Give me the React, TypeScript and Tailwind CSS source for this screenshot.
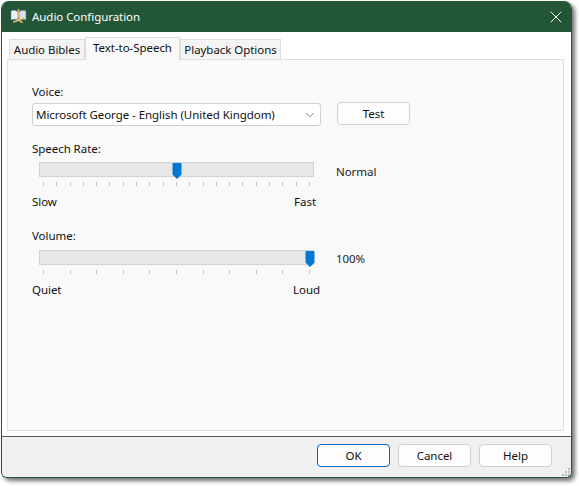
import { ChevronDown, X } from 'lucide-react';

const font = 'font-["Noto_Sans",sans-serif]';

function DialogButton({ label, primary, className }: { label: string; primary?: boolean; className?: string }) {
  return (
    <button
      className={`w-[73px] h-[23px] rounded-[4px] bg-[#fdfdfd] text-[11.5px] tracking-[-0.05px] text-[#111] border ${
        primary ? 'border-[#0067c0]' : 'border-[#d0d0d0]'
      } ${className ?? ''}`}
    >
      {label}
    </button>
  );
}

function Slider({ value, ticks, left, right, rightClass, note, noteClass }: { value: number; ticks: number; left: string; right: string; rightClass?: string; note: string; noteClass: string }) {
  return (
    <div className="flex">
      <div className="w-[288px]">
        <div className="ml-[7px] w-[275px] h-[15px] bg-[#e6e8e8] border border-[#d2d2d2] relative">
          <svg
            className="absolute top-0 -ml-[5px]"
            style={{ left: `${value}%` }}
            width="10"
            height="16"
            viewBox="0 0 10 16"
          >
            <path d="M0.5 1a1 1 0 0 1 1-1h7a1 1 0 0 1 1 1v10.5l-4.5 4.5-4.5-4.5z" fill="#0078d4" />
          </svg>
        </div>
        <div className="ml-[11px] w-[267px] h-[4px] mt-[5px] flex justify-between">
          {Array.from({ length: ticks }).map((_, i) => (
            <span key={i} className="w-px h-[4px] bg-[#c4c4c4]" />
          ))}
        </div>
        <div className="flex justify-between mt-[7px] leading-[18px] text-[#111]">
          <span>{left}</span>
          <span className={rightClass}>{right}</span>
        </div>
      </div>
      <span className={`ml-[16px] leading-[18px] text-[#222] ${noteClass}`}>{note}</span>
    </div>
  );
}

export default function App() {
  return (
    <div className={`w-[579px] h-[486px] bg-white pl-px pt-px ${font} text-[11.5px] tracking-[-0.05px]`}>
      <div className="w-[571px] h-[477px] rounded-t-[8px] rounded-b-[6px] border-x-[1.5px] border-b-[1.5px] border-[#235636] bg-white shadow-[3px_3px_4px_rgba(0,0,0,0.55)] flex flex-col overflow-hidden">
        <div className="h-[31px] bg-[#235636] flex items-center pl-[8px] pr-[5px] text-white">
          <svg width="17" height="17" viewBox="0 0 17 17">
            <path d="M1 3c2-1 5-1 7 1v8c-2-1-5-1-7 0z" fill="#eef3f8" stroke="#6f86a3" strokeWidth="0.6" />
            <path d="M16 3c-2-1-5-1-7 1v8c2-1 5-1 7 0z" fill="#d5e2f0" stroke="#5c7ba0" strokeWidth="0.6" />
            <path d="M7.6 1h1.8v9H7.6z" fill="#e0b060" />
            <path d="M3 13.5l11-4.5 .6 1.4-11 4.5zM8 11l5 3-.8 1.2-5-3z" fill="#e8c070" />
          </svg>
          <span className="ml-[5px]">Audio Configuration</span>
          <X className="ml-auto" size={20} strokeWidth={1.2} />
        </div>

        <div className="flex-1 flex flex-col px-[5px] pt-[5px]">
          <div className="flex items-end pl-[2px] h-[22px] relative z-10">
            <div className="w-[76px] h-[20px] bg-[#f4f4f4] border border-b-0 border-[#dcdcdc] flex items-center justify-center text-[#111]">
              Audio Bibles
            </div>
            <div className="w-[95px] h-[23px] -mb-px bg-[#f9f9f9] border border-b-0 border-[#dcdcdc] flex justify-center pt-[1px] text-[#111]">
              Text-to-Speech
            </div>
            <div className="w-[101px] h-[20px] bg-[#f4f4f4] border border-b-0 border-[#dcdcdc] flex items-center justify-center text-[#111]">
              Playback Options
            </div>
          </div>

          <div className="w-[557px] h-[372px] bg-[#f9f9f9] border border-[#dfdfdf] pl-[24px] pt-[23px]">
            <div className="leading-[18px] text-[#111]">Voice:</div>
            <div className="flex items-start mt-[2px]">
              <div className="w-[289px] h-[23px] bg-white border border-[#d0d0d0] rounded-[3px] flex items-center pl-[3px] pr-[3px] text-[#111]">
                <span>Microsoft George - English (United Kingdom)</span>
                <ChevronDown className="ml-auto text-[#444]" size={14} strokeWidth={1.1} />
              </div>
              <DialogButton label="Test" className="ml-[16px] -mt-px" />
            </div>

            <div className="mt-[14px] leading-[18px] text-[#111]">Speech Rate:</div>
            <div className="mt-[4px]">
              <Slider value={50} ticks={21} left="Slow" right="Fast" rightClass="mr-[4px]" note="Normal" noteClass="mt-[1px]" />
            </div>

            <div className="mt-[16px] leading-[18px] text-[#111]">Volume:</div>
            <div className="mt-[5px]">
              <Slider value={98.9} ticks={11} left="Quiet" right="Loud" note="100%" noteClass="mt-0" />
            </div>
          </div>
        </div>

        <div className="h-[41px] border-t border-[#5a5a5a] bg-[#f0f0f0] flex justify-end gap-[8px] pr-[19px] pt-[7px] relative">
          <DialogButton label="OK" primary />
          <DialogButton label="Cancel" />
          <DialogButton label="Help" />
          <svg className="absolute right-0 bottom-0" width="10" height="10" viewBox="0 0 10 10" fill="#b8b8b8">
            <rect x="7" y="1" width="2" height="2" />
            <rect x="4" y="4" width="2" height="2" />
            <rect x="7" y="4" width="2" height="2" />
            <rect x="1" y="7" width="2" height="2" />
            <rect x="4" y="7" width="2" height="2" />
            <rect x="7" y="7" width="2" height="2" />
          </svg>
        </div>
      </div>
    </div>
  );
}
